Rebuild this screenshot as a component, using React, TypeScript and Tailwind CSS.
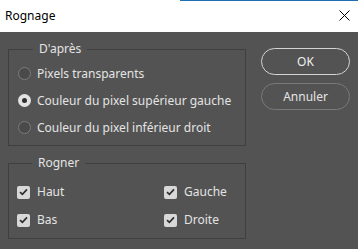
import React from "react";

const font = { fontFamily: '"Noto Sans", "Open Sans", sans-serif' };

function Radio({ checked, label }: { checked?: boolean; label: string }) {
  return (
    <div className="flex h-[27px] items-center gap-[6px]">
      <span
        className={
          checked
            ? "flex h-[13px] w-[13px] items-center justify-center rounded-full bg-[#e2e2e2]"
            : "h-[13px] w-[13px] rounded-full border border-[#7c7c7c] bg-[#4a4a4a]"
        }
      >
        {checked && <span className="h-[5px] w-[5px] rounded-full bg-[#303030]" />}
      </span>
      <span>{label}</span>
    </div>
  );
}

function Check({ label }: { label: string }) {
  return (
    <div className="flex h-[28px] items-center gap-[7px]">
      <span className="flex h-[13px] w-[13px] items-center justify-center rounded-[2px] bg-[#d8d8d8]">
        <svg width="9" height="8" viewBox="0 0 9 8">
          <path d="M1 4.2 L3.4 6.4 L8 1.4" fill="none" stroke="#2e2e2e" strokeWidth="1.7" />
        </svg>
      </span>
      <span>{label}</span>
    </div>
  );
}

export default function App() {
  return (
    <div className="h-[249px] w-[358px] overflow-hidden bg-[#535353] text-[12px] text-[#e4e4e4]" style={font}>
      <div className="flex h-[1px]">
        <div className="w-[180px] bg-white" />
        <div className="flex-1 bg-[#1f6db3]" />
      </div>
      <div className="flex h-[31px] items-center justify-between bg-white pl-[5px] pr-[8px] text-[12px] text-black">
        <span className="-mt-[2px]">Rognage</span>
        <svg width="11" height="11" viewBox="0 0 11 11" className="-mt-[2px]">
          <path d="M0.5 0.5 L10.5 10.5 M10.5 0.5 L0.5 10.5" stroke="#000" strokeWidth="1" />
        </svg>
      </div>
      <div className="flex gap-[15px] pl-[8px]">
        <div className="mt-[9px] flex w-[238px] flex-col gap-[9px]">
          <fieldset className="border border-[#3f3f3f] pb-[4px] pl-[9px] pt-[3px]">
            <legend className="ml-[15px] px-[6px] leading-[16px]">D'après</legend>
            <Radio label="Pixels transparents" />
            <Radio checked label="Couleur du pixel supérieur gauche" />
            <Radio label="Couleur du pixel inférieur droit" />
          </fieldset>
          <fieldset className="border border-[#3f3f3f] pb-[4px] pl-[8px] pt-[7px]">
            <legend className="ml-[15px] px-[6px] leading-[16px]">Rogner</legend>
            <div className="grid grid-cols-[147px_1fr]">
              <Check label="Haut" />
              <Check label="Gauche" />
              <Check label="Bas" />
              <Check label="Droite" />
            </div>
          </fieldset>
        </div>
        <div className="mt-[16px] flex w-[89px] flex-col gap-[8px]">
          <button className="h-[27px] rounded-full border-[1.5px] border-[#d4d4d4] text-[#f0f0f0]">OK</button>
          <button className="h-[27px] rounded-full border border-[#7a7a7a] text-[#e4e4e4]">Annuler</button>
        </div>
      </div>
    </div>
  );
}
